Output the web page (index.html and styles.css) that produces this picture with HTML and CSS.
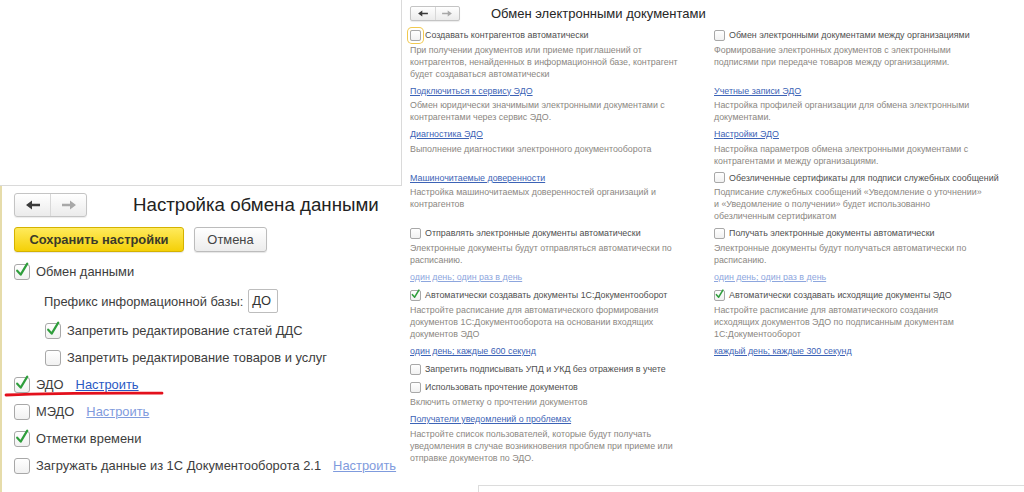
FILE: index.html
```html
<!DOCTYPE html>
<html lang="ru">
<head>
<meta charset="utf-8">
<title>Настройка обмена данными</title>
<link rel="stylesheet" href="styles.css">
</head>
<body>
<div class="canvas">
  <div class="col-left">
    <div class="blank"></div>
    <section class="settings">
      <div class="head">
        <div class="nav nav-lg">
          <span class="nav-btn"><svg class="arr" width="14" height="10" viewBox="0 0 14 10"><path d="M0 5 L6 0.6 V3.8 H14 V6.2 H6 V9.4 Z" fill="#3a3a3a"/></svg></span>
          <span class="nav-btn"><svg class="arr" width="14" height="10" viewBox="0 0 14 10"><path d="M14 5 L8 0.6 V3.8 H0 V6.2 H8 V9.4 Z" fill="#a8a8a8"/></svg></span>
        </div>
        <h1 class="title">Настройка обмена данными</h1>
      </div>
      <div class="actions">
        <button class="btn btn-primary">Сохранить настройки</button>
        <button class="btn btn-cancel">Отмена</button>
      </div>
      <div class="rows">
        <div class="row"><span class="cb"><svg viewBox="0 0 16 16"><path d="M2.5 6.5 L6.5 11 L14 -1.5"/></svg></span><span>Обмен данными</span></div>
        <div class="row row-prefix"><span>Префикс информационной базы:</span><span class="input">ДО</span></div>
        <div class="row indent"><span class="cb"><svg viewBox="0 0 16 16"><path d="M2.5 6.5 L6.5 11 L14 -1.5"/></svg></span><span>Запретить редактирование статей ДДС</span></div>
        <div class="row indent"><span class="cb"></span><span>Запретить редактирование товаров и услуг</span></div>
        <div class="row row-mark"><span class="cb"><svg viewBox="0 0 16 16"><path d="M2.5 6.5 L6.5 11 L14 -1.5"/></svg></span><span>ЭДО</span><a class="lnk">Настроить</a>
          <svg class="redline" width="158" height="6" viewBox="0 0 158 6"><path d="M1 4 Q 60 1.6 157 2.2" /></svg>
        </div>
        <div class="row"><span class="cb"></span><span>МЭДО</span><a class="lnk dim">Настроить</a></div>
        <div class="row"><span class="cb"><svg viewBox="0 0 16 16"><path d="M2.5 6.5 L6.5 11 L14 -1.5"/></svg></span><span>Отметки времени</span></div>
        <div class="row"><span class="cb"></span><span>Загружать данные из 1С Документооборота 2.1</span><a class="lnk dim">Настроить</a></div>
      </div>
    </section>
  </div>

  <div class="col-right">
    <section class="edo">
      <div class="edo-head">
        <div class="nav nav-sm">
          <span class="nav-btn"><svg width="10" height="7" viewBox="0 0 14 10"><path d="M0 5 L6 0.6 V3.8 H14 V6.2 H6 V9.4 Z" fill="#3a3a3a"/></svg></span>
          <span class="nav-btn"><svg width="10" height="7" viewBox="0 0 14 10"><path d="M14 5 L8 0.6 V3.8 H0 V6.2 H8 V9.4 Z" fill="#a8a8a8"/></svg></span>
        </div>
        <h2 class="edo-title">Обмен электронными документами</h2>
      </div>
      <div class="edo-grid">
        <div class="cell">
          <div class="opt"><span class="cb cb-sm focus"></span><span>Создавать контрагентов автоматически</span></div>
          <div class="desc">При получении документов или приеме приглашений от<br>контрагентов, ненайденных в информационной базе, контрагент<br>будет создаваться автоматически</div>
        </div>
        <div class="cell">
          <div class="opt"><span class="cb cb-sm"></span><span>Обмен электронными документами между организациями</span></div>
          <div class="desc">Формирование электронных документов с электронными<br>подписями при передаче товаров между организациями.</div>
        </div>

        <div class="cell">
          <a class="a">Подключиться к сервису ЭДО</a>
          <div class="desc">Обмен юридически значимыми электронными документами с<br>контрагентами через сервис ЭДО.</div>
        </div>
        <div class="cell">
          <a class="a">Учетные записи ЭДО</a>
          <div class="desc">Настройка профилей организации для обмена электронными<br>документами.</div>
        </div>

        <div class="cell">
          <a class="a">Диагностика ЭДО</a>
          <div class="desc">Выполнение диагностики электронного документооборота</div>
        </div>
        <div class="cell">
          <a class="a">Настройки ЭДО</a>
          <div class="desc">Настройка параметров обмена электронными документами с<br>контрагентами и между организациями.</div>
        </div>

        <div class="cell">
          <a class="a">Машиночитаемые доверенности</a>
          <div class="desc">Настройка машиночитаемых доверенностей организаций и<br>контрагентов</div>
        </div>
        <div class="cell">
          <div class="opt"><span class="cb cb-sm"></span><span>Обезличенные сертификаты для подписи служебных сообщений</span></div>
          <div class="desc">Подписание служебных сообщений «Уведомление о уточнении»<br>и «Уведомление о получении» будет использованно<br>обезличенным сертификатом</div>
        </div>

        <div class="cell">
          <div class="opt"><span class="cb cb-sm"></span><span>Отправлять электронные документы автоматически</span></div>
          <div class="desc">Электронные документы будут отправляться автоматически по<br>расписанию.</div>
          <a class="a light">один день; один раз в день</a>
        </div>
        <div class="cell">
          <div class="opt"><span class="cb cb-sm"></span><span>Получать электронные документы автоматически</span></div>
          <div class="desc">Электронные документы будут получаться автоматически по<br>расписанию.</div>
          <a class="a light">один день; один раз в день</a>
        </div>

        <div class="cell">
          <div class="opt"><span class="cb cb-sm"><svg viewBox="0 0 16 16"><path d="M2.5 6.5 L6.5 11 L14 -1.5"/></svg></span><span>Автоматически создавать документы 1С:Документооборот</span></div>
          <div class="desc">Настройте расписание для автоматического формирования<br>документов 1С:Документооборота на основании входящих<br>документов ЭДО</div>
          <a class="a">один день; каждые 600 секунд</a>
        </div>
        <div class="cell">
          <div class="opt"><span class="cb cb-sm"><svg viewBox="0 0 16 16"><path d="M2.5 6.5 L6.5 11 L14 -1.5"/></svg></span><span>Автоматически создавать исходящие документы ЭДО</span></div>
          <div class="desc">Настройте расписание для автоматического создания<br>исходящих документов ЭДО по подписанным документам<br>1С:Документооборот</div>
          <a class="a">каждый день; каждые 300 секунд</a>
        </div>

        <div class="cell">
          <div class="opt"><span class="cb cb-sm"></span><span>Запретить подписывать УПД и УКД без отражения в учете</span></div>
          <div class="opt"><span class="cb cb-sm"></span><span>Использовать прочтение документов</span></div>
          <div class="desc">Включить отметку о прочтении документов</div>
          <a class="a">Получатели уведомлений о проблемах</a>
          <div class="desc">Настройте список пользователей, которые будут получать<br>уведомления в случае возникновения проблем при приеме или<br>отправке документов по ЭДО.</div>
        </div>
      </div>
    </section>
    <div class="below"></div>
  </div>
</div>
</body>
</html>
```

FILE: styles.css
```css
* { box-sizing: border-box; }
html, body { margin: 0; padding: 0; background: #fff; }
body { font-family: "Liberation Sans", Arial, sans-serif; color: #333; }

.canvas {
  display: grid;
  grid-template-columns: 402px 1fr;
  width: 1024px;
  height: 492px;
  overflow: hidden;
}

/* ---------- left column ---------- */
.col-left { display: flex; flex-direction: column; }
.blank {
  flex: none;
  height: 186px;
  border-right: 1px solid #dadada;
  border-bottom: 1px solid #dadada;
}
.settings {
  flex: 1;
  border-left: 2px solid #e6dcaa;
  padding: 7px 0 0 12px;
  font-size: 12.9px;
  color: #3d3d3d;
}
.head { display: flex; align-items: center; height: 24px; }

.nav {
  display: flex;
  border: 1px solid #c4c4c4;
  border-radius: 3px;
  background: linear-gradient(#ffffff, #ebebeb);
  box-shadow: 0 1px 1px rgba(0, 0, 0, 0.08);
}
.nav-lg { width: 73px; height: 24px; }
.nav-sm { width: 50px; height: 15px; border-radius: 2px; }
.nav-btn { flex: 1; display: flex; align-items: center; justify-content: center; }
.nav-btn + .nav-btn { border-left: 1px solid #d8d8d8; }

.title {
  margin: 0 0 0 46px;
  font-size: 18.7px;
  font-weight: normal;
  color: #222;
  white-space: nowrap;
}

.actions { display: flex; gap: 10px; margin-top: 10px; }
.btn {
  height: 25px;
  font-family: inherit;
  font-size: 12.9px;
  border-radius: 3px;
  border: 1px solid #bcbcbc;
  background: linear-gradient(#ffffff, #ececec);
  color: #444;
  box-shadow: 0 1px 1px rgba(0, 0, 0, 0.1);
  padding: 0;
}
.btn-primary {
  width: 170px;
  background: linear-gradient(#ffea5c, #f4d007);
  border-color: #d4b200;
  font-weight: bold;
  color: #3a3a2a;
}
.btn-cancel { width: 73px; }

.rows { margin-top: 6px; display: flex; flex-direction: column; }
.row {
  height: 27px;
  display: flex;
  align-items: center;
  white-space: nowrap;
  position: relative;
}
.row-prefix { height: 32px; padding-left: 30px; }
.indent { padding-left: 31px; }

.cb {
  flex: none;
  position: relative;
  width: 16px;
  height: 16px;
  margin-right: 6px;
  border: 1px solid #a8a8a8;
  border-radius: 3px;
  background: linear-gradient(#ffffff, #f1f1f1);
}
.cb svg {
  position: absolute;
  left: 0;
  top: 0;
  width: 100%;
  height: 100%;
  overflow: visible;
}
.cb svg path { fill: none; stroke: #2f9e3c; stroke-width: 2.5; stroke-linecap: round; stroke-linejoin: round; }

.input {
  width: 30px;
  height: 24px;
  margin-left: 5px;
  padding-left: 3px;
  line-height: 22px;
  border: 1px solid #bdbdbd;
  border-radius: 2px;
  color: #333;
}

.lnk { margin-left: 12px; color: #2a59c4; text-decoration: underline; }
.lnk.dim { color: #7f9bdd; }

.redline { position: absolute; left: -9px; top: 20px; overflow: visible; }
.redline path { fill: none; stroke: #e3101c; stroke-width: 2.8; stroke-linecap: round; }

/* ---------- right column ---------- */
.col-right { display: flex; flex-direction: column; }
.edo {
  flex: none;
  height: 485px;
  padding: 6px 0 0 8px;
  font-size: 8.9px;
  color: #8b8782;
}
.edo-head { display: flex; align-items: center; height: 15px; }
.edo-title {
  margin: 0 0 0 31px;
  font-size: 13px;
  font-weight: normal;
  color: #262626;
  white-space: nowrap;
}
.edo-grid {
  display: grid;
  grid-template-columns: 304px 1fr;
  row-gap: 4px;
  margin-top: 7px;
}
.cell { display: flex; flex-direction: column; align-items: flex-start; }
.opt {
  height: 14px;
  display: flex;
  align-items: center;
  color: #4f4f4f;
  white-space: nowrap;
}
.opt + .opt { margin-top: 4px; }
.cb-sm { width: 11px; height: 11px; margin-right: 4px; border-radius: 2px; }
.cb-sm svg path { stroke-width: 2.8; }
.focus { box-shadow: 0 0 0 2px #fff, 0 0 0 3px #f1c94f; }

.a {
  height: 14px;
  line-height: 14px;
  color: #3c63b6;
  text-decoration: underline;
  white-space: nowrap;
}
.a.light { color: #8da6de; }
.desc { line-height: 12px; margin-top: 1.5px; white-space: nowrap; }
.desc + .a { margin-top: 4.5px; }

.below {
  flex: 1;
  margin-left: 76px;
  border-top: 1px solid #dcdcdc;
  border-left: 1px solid #dcdcdc;
}
```
